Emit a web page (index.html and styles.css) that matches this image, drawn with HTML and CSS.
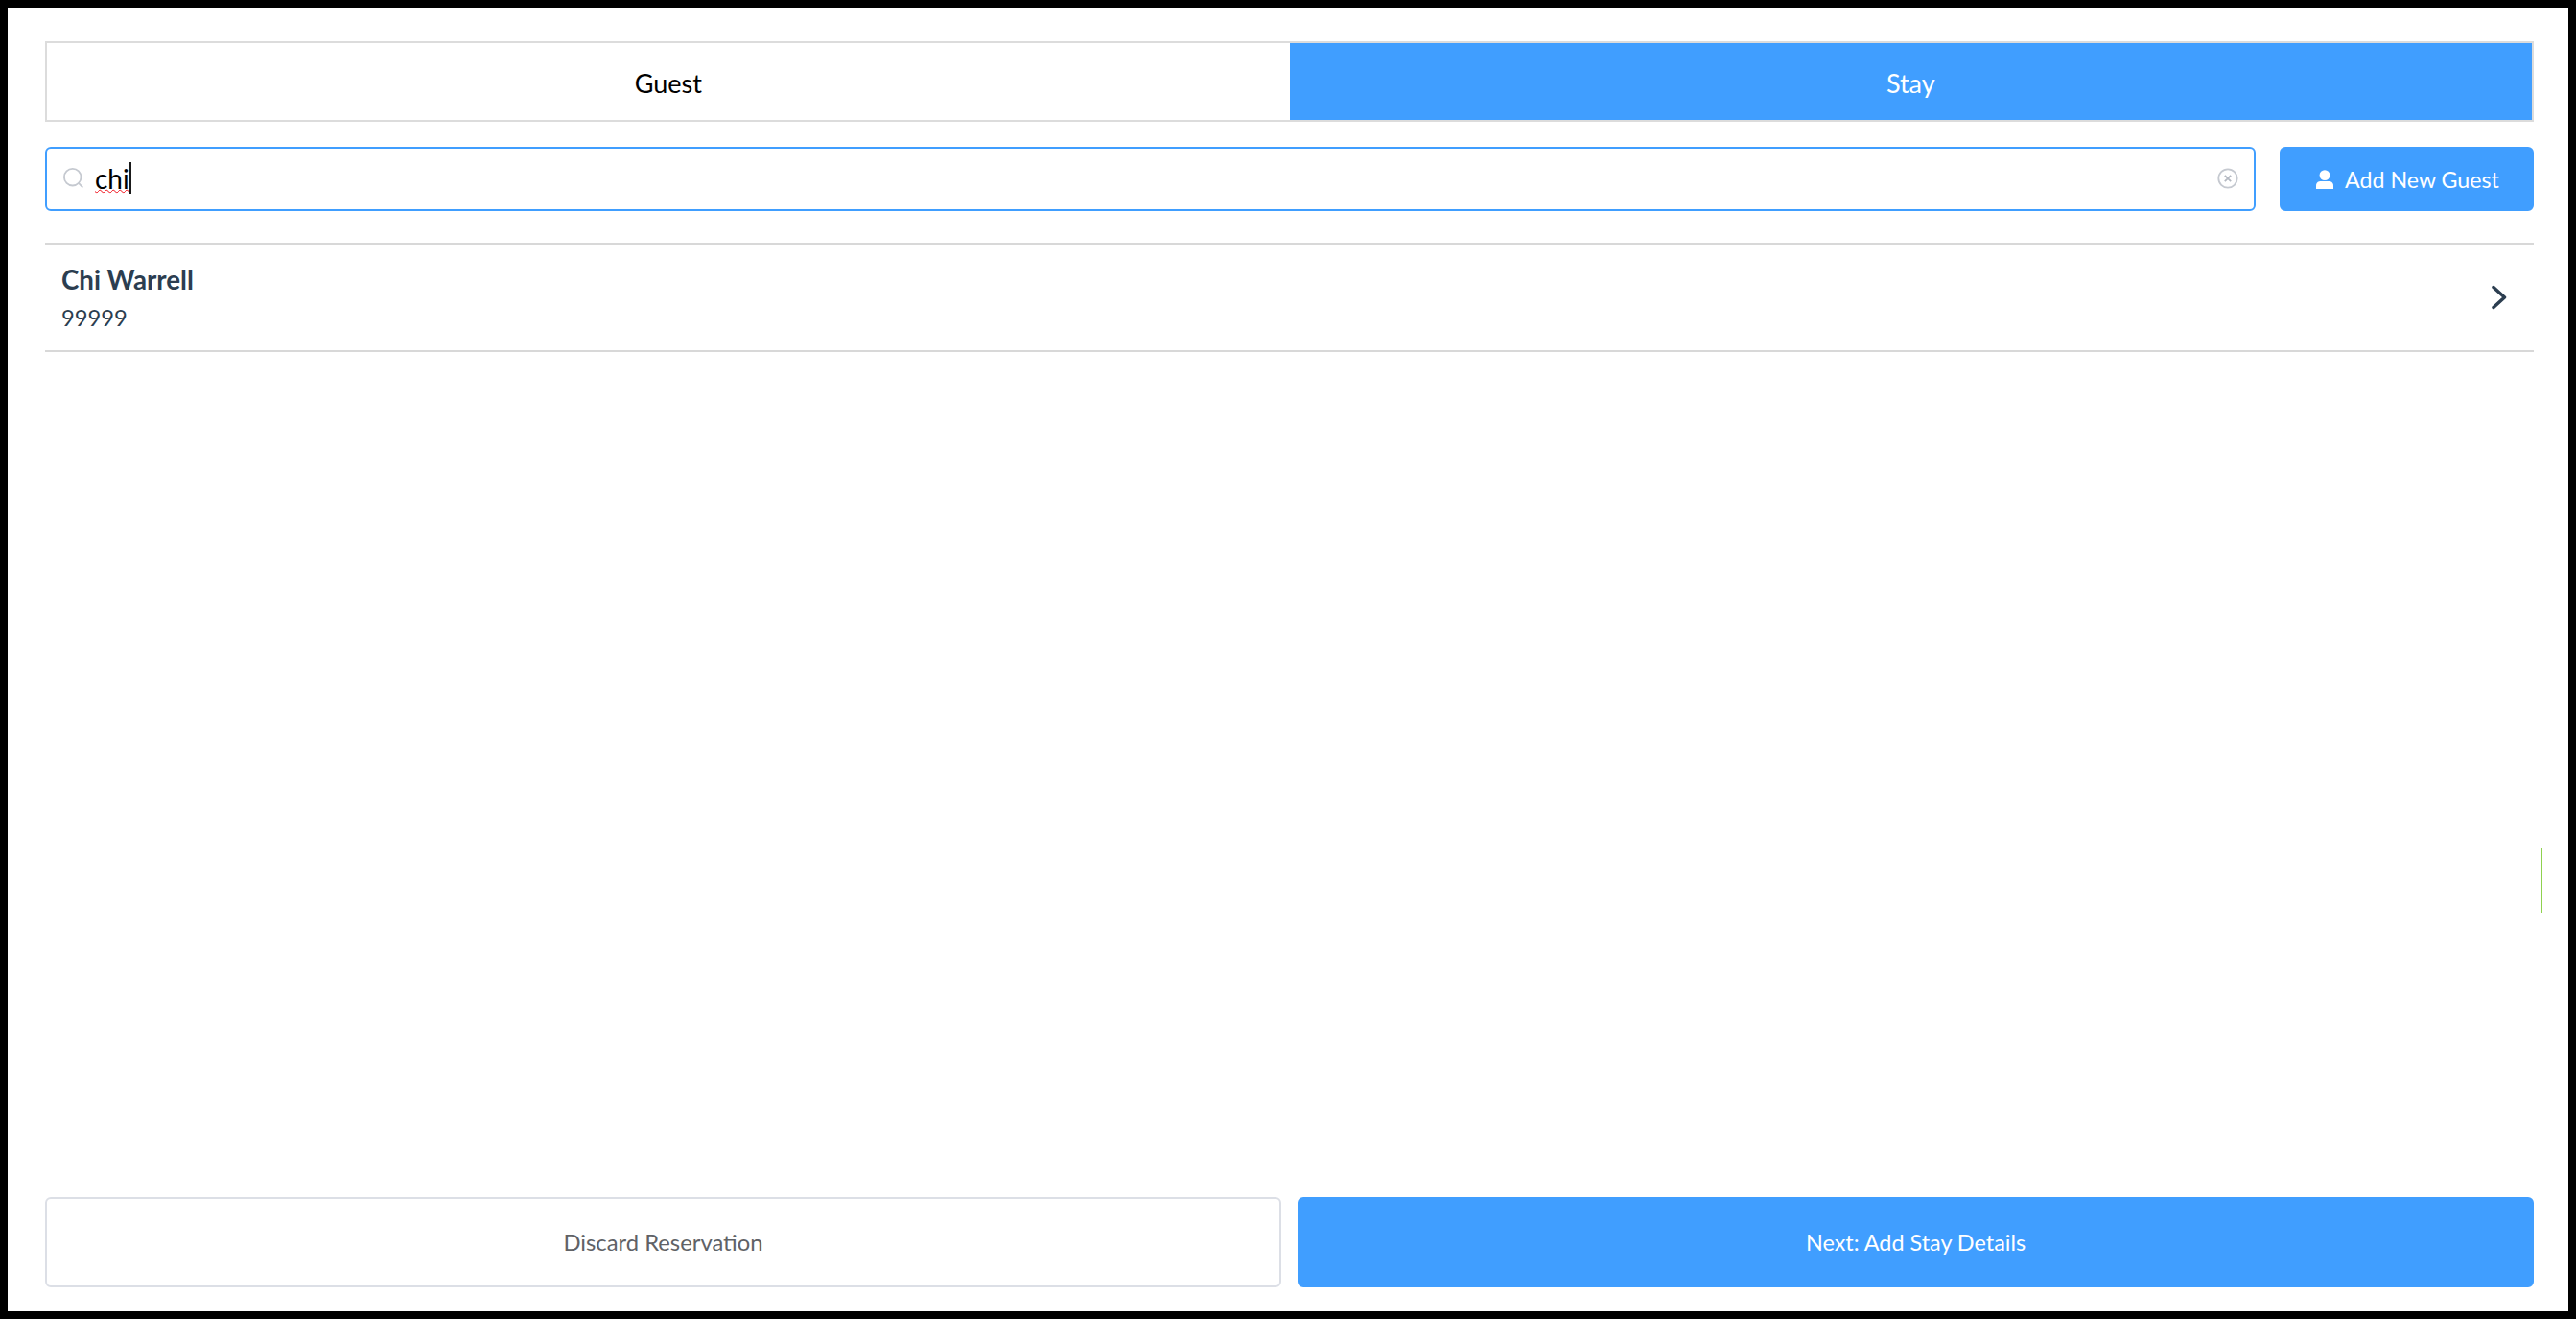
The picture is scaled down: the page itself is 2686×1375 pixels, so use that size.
FILE: index.html
```html
<!DOCTYPE html>
<html lang="en">
<head>
<meta charset="utf-8">
<title>New Reservation</title>
<link rel="stylesheet" href="styles.css">
</head>
<body>
<main class="panel">
  <nav class="tabs">
    <div class="tab">Guest</div>
    <div class="tab tab-active">Stay</div>
  </nav>
  <div class="search-row">
    <div class="search">
      <svg class="search-icon" width="21" height="21" viewBox="0 0 21 21" fill="none"><circle cx="9.700" cy="9.700" r="8.800" stroke="#c5c9d0" stroke-width="1.800"/><path d="M16.200 16.200l3.600 3.600" stroke="#c5c9d0" stroke-width="1.800" stroke-linecap="round"/></svg>
      <div class="search-value"><span class="misspelled">chi</span><span class="caret"></span></div>
      <svg class="clear-icon" width="22" height="22" viewBox="0 0 22 22" fill="none"><circle cx="11" cy="11" r="9.700" stroke="#c5c9d0" stroke-width="1.800"/><path d="M7.800 7.800l6.400 6.400M14.200 7.800l-6.400 6.400" stroke="#b4b9c2" stroke-width="1.800"/></svg>
    </div>
    <button class="btn btn-primary btn-add">
      <svg width="18" height="20" viewBox="0 0 18 20" fill="#fff"><circle cx="9" cy="5.600" r="5.400"/><path d="M0 20v-3.600C0 13.400 2.400 12 5 12h8c2.600 0 5 1.400 5 4.400V20z"/></svg>
      <span>Add New Guest</span>
    </button>
  </div>
  <div class="result">
    <div class="result-text">
      <div class="result-name">Chi Warrell</div>
      <div class="result-id">99999</div>
    </div>
    <svg class="chevron" width="16" height="26" viewBox="0 0 16 26" fill="none"><path d="M2 2.500l11.500 10.500L2 23.500" stroke="#2c3e50" stroke-width="3.500" stroke-linecap="round" stroke-linejoin="round"/></svg>
  </div>
  <div class="spacer"></div>
  <footer class="actions">
    <button class="btn btn-outline">Discard Reservation</button>
    <button class="btn btn-primary btn-next">Next: Add Stay Details</button>
  </footer>
  <div class="edge-mark"></div>
</main>
</body>
</html>
```
FILE: styles.css
```css
* { box-sizing: border-box; }
html, body { height: 100%; }
body {
  margin: 0;
  padding: 8px;
  background: #000;
  font-family: Lato, "Open Sans", sans-serif;
  color: #2c3e50;
}
.panel {
  position: relative;
  height: 100%;
  display: flex;
  flex-direction: column;
  padding: 35px 36px 25px 39px;
  background: #fff;
}
.tabs { display: flex; height: 84px; border: 2px solid #dcdcdc; }
.tab {
  flex: 1;
  display: flex;
  align-items: center;
  justify-content: center;
  padding-top: 2px;
  font-size: 27px;
  color: #000;
}
.tab-active { background: #409eff; color: #fff; }
.search-row { display: flex; gap: 25px; margin-top: 26px; height: 67px; }
.search {
  flex: 1;
  display: flex;
  align-items: center;
  padding: 0 16px 2px 17px;
  border: 2px solid #409eff;
  border-radius: 6px;
  background: #fff;
}
.search-icon { flex: none; margin-right: 12px; }
.search-value { flex: 1; display: flex; align-items: center; font-size: 28px; color: #000; }
.misspelled { text-decoration: underline wavy #f0101a 1px; text-underline-offset: 0; text-decoration-skip-ink: none; }
.caret { width: 2px; height: 33px; background: #1a1a1a; }
.clear-icon { flex: none; }
.btn {
  display: flex;
  align-items: center;
  justify-content: center;
  padding: 0;
  border-radius: 6px;
  font-family: inherit;
  cursor: pointer;
}
.btn-primary { border: 2px solid #409eff; background: #409eff; color: #fff; }
.btn-add { flex: none; width: 265px; padding-left: 2px; gap: 12px; font-size: 23.2px; }
.btn-outline { border: 2px solid #dcdfe6; background: #fff; color: #606266; }
.result {
  display: flex;
  align-items: center;
  justify-content: space-between;
  height: 114px;
  margin-top: 33px;
  padding: 3px 28px 0 17px;
  border-top: 2px solid #d8d8d8;
  border-bottom: 2px solid #d8d8d8;
}
.result-name { font-size: 27.7px; font-weight: 700; line-height: 36px; }
.result-id { margin-top: 3px; font-size: 23.7px; line-height: 36px; }
.chevron { margin-top: -3px; }
.spacer { flex: 1; }
.actions { display: flex; gap: 17px; height: 94px; }
.actions .btn { flex: 1; font-size: 23.8px; }
.actions .btn-next { font-size: 23.4px; }
.edge-mark {
  position: absolute;
  left: 2641px;
  top: 876px;
  width: 2px;
  height: 68px;
  background: #8fd14f;
}
```
